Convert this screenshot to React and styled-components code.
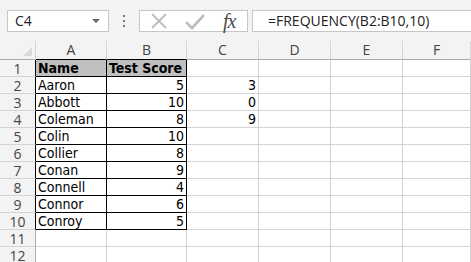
import React from "react";
import styled, { createGlobalStyle } from "styled-components";

const colors = {
  chrome: "#f3f3f3",
  border: "#c6c6c6",
  grid: "#d4d4d4",
  headText: "#444444",
  fill: "#bfbfbf",
  ink: "#000000",
};

const GlobalStyle = createGlobalStyle`
  html, body {
    margin: 0;
    padding: 0;
    background: #ffffff;
    overflow: hidden;
  }
`;

const Page = styled.div`
  width: 471px;
  height: 262px;
  overflow: hidden;
  background: #ffffff;
`;

const Toolbar = styled.div`
  display: flex;
  align-items: center;
  height: 41px;
  padding: 0 0 0 7px;
  background: ${colors.chrome};
  box-sizing: border-box;
`;

const NameBox = styled.div`
  display: flex;
  align-items: center;
  justify-content: space-between;
  box-sizing: border-box;
  width: 102px;
  height: 22px;
  padding: 0 8px 0 7px;
  background: #fff;
  border: 1px solid ${colors.border};
  font-family: "Open Sans", "Noto Sans", sans-serif;
  font-size: 14px;
  color: #222;
`;

const Caret = styled.span`
  width: 0;
  height: 0;
  border-left: 4px solid transparent;
  border-right: 4px solid transparent;
  border-top: 4px solid #666;
`;

const Dots = styled.div`
  display: flex;
  flex-direction: column;
  align-items: center;
  gap: 3px;
  width: 30px;
  span {
    width: 2px;
    height: 2px;
    background: #777;
  }
`;

const IconBox = styled.div`
  display: flex;
  align-items: center;
  box-sizing: border-box;
  width: 109px;
  height: 22px;
  padding: 0 0 0 9px;
  background: #fff;
  border: 1px solid ${colors.border};
  gap: 15px;
`;

const Fx = styled.span`
  font-family: "Liberation Serif", "DejaVu Serif", serif;
  font-style: italic;
  font-size: 20px;
  color: #4a4a4a;
  margin-left: 2px;
  line-height: 1;
  letter-spacing: -1px;
`;

const FormulaBox = styled.div`
  flex: 1;
  display: flex;
  align-items: center;
  box-sizing: border-box;
  height: 22px;
  margin-left: 4px;
  padding-left: 15px;
  background: #fff;
  border: 1px solid ${colors.border};
  border-right: none;
  font-family: "Open Sans", "Noto Sans", sans-serif;
  font-size: 14px;
  color: #222;
  white-space: nowrap;
`;

const Sheet = styled.div`
  display: grid;
  grid-template-columns: 36px 71px 80px 72px 72px 72px 1fr;
  grid-auto-rows: 17px;
  grid-template-rows: 19px;
`;

const Corner = styled.div`
  position: relative;
  background: ${colors.chrome};
  border-right: 1px solid ${colors.grid};
  border-bottom: 1px solid #ababab;
  &::after {
    content: "";
    position: absolute;
    right: 3px;
    bottom: 3px;
    width: 0;
    height: 0;
    border-left: 9px solid transparent;
    border-bottom: 9px solid #dadada;
  }
`;

const ColHead = styled.div`
  display: flex;
  align-items: center;
  justify-content: center;
  background: ${colors.chrome};
  border-right: 1px solid ${colors.grid};
  border-bottom: 1px solid ${(p) => (p.$dark ? colors.ink : "#ababab")};
  font-family: "Open Sans", "Noto Sans", sans-serif;
  font-size: 14px;
  line-height: 16px;
  color: ${colors.headText};
`;

const RowHead = styled.div`
  display: flex;
  align-items: center;
  justify-content: center;
  overflow: hidden;
  background: ${colors.chrome};
  border-right: 1px solid ${(p) => (p.$dark ? colors.ink : "#ababab")};
  border-bottom: 1px solid ${colors.grid};
  font-family: "Open Sans", "Noto Sans", sans-serif;
  font-size: 14px;
  line-height: 15px;
  color: ${colors.headText};
`;

const Cell = styled.div`
  display: flex;
  align-items: center;
  justify-content: ${(p) => (p.$num ? "flex-end" : "flex-start")};
  box-sizing: border-box;
  padding: 0 2px 0 2px;
  overflow: hidden;
  white-space: nowrap;
  background: ${(p) => (p.$head ? colors.fill : "#fff")};
  border-right: 1px solid ${(p) => (p.$table ? colors.ink : colors.grid)};
  border-bottom: 1px solid ${(p) => (p.$table ? colors.ink : colors.grid)};
  font-family: "DejaVu Sans Condensed", "DejaVu Sans", sans-serif;
  font-size: 14px;
  line-height: 15px;
  font-weight: ${(p) => (p.$head ? 700 : 400)};
  color: #000;
`;

const CrossIcon = () => (
  <svg width="20" height="18" viewBox="0 0 20 18">
    <path d="M3 2 L17 16 M17 2 L3 16" stroke="#bdbdbd" strokeWidth="1.8" fill="none" />
  </svg>
);

const CheckIcon = () => (
  <svg width="22" height="18" viewBox="0 0 22 18">
    <path d="M2 10 L8 16 L20 3" stroke="#bdbdbd" strokeWidth="2.6" fill="none" />
  </svg>
);

const rows = [
  ["Name", "Test Score", ""],
  ["Aaron", "5", "3"],
  ["Abbott", "10", "0"],
  ["Coleman", "8", "9"],
  ["Colin", "10", ""],
  ["Collier", "8", ""],
  ["Conan", "9", ""],
  ["Connell", "4", ""],
  ["Connor", "6", ""],
  ["Conroy", "5", ""],
  ["", "", ""],
  ["", "", ""],
];

const columns = ["A", "B", "C", "D", "E", "F"];

export default function App() {
  return (
    <Page>
      <GlobalStyle />
      <Toolbar>
        <NameBox>
          C4
          <Caret />
        </NameBox>
        <Dots>
          <span />
          <span />
          <span />
        </Dots>
        <IconBox>
          <CrossIcon />
          <CheckIcon />
          <Fx>fx</Fx>
        </IconBox>
        <FormulaBox>=FREQUENCY(B2:B10,10)</FormulaBox>
      </Toolbar>
      <Sheet>
        <Corner />
        {columns.map((c, i) => (
          <ColHead key={c} $dark={i < 2}>
            {c}
          </ColHead>
        ))}
        {rows.map((r, i) => {
          const inTable = i < 10;
          return (
            <React.Fragment key={i}>
              <RowHead $dark={inTable}>{i + 1}</RowHead>
              <Cell $table={inTable} $head={i === 0}>
                {r[0]}
              </Cell>
              <Cell $table={inTable} $head={i === 0} $num={i > 0}>
                {r[1]}
              </Cell>
              <Cell $num>{r[2]}</Cell>
              <Cell />
              <Cell />
              <Cell />
            </React.Fragment>
          );
        })}
      </Sheet>
    </Page>
  );
}
